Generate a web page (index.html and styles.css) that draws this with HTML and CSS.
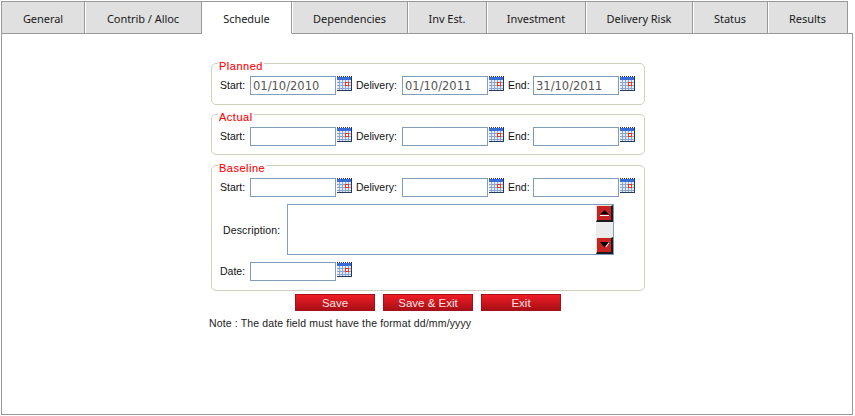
FILE: index.html
```html
<!DOCTYPE html>
<html lang="en">
<head>
<meta charset="utf-8">
<title>Schedule</title>
<link rel="stylesheet" href="styles.css">
</head>
<body>
<svg class="defs" width="0" height="0" aria-hidden="true">
  <symbol id="cal" viewBox="0 0 15 15">
    <path d="M0 .5h15" stroke="#333" stroke-dasharray="1 1"/>
    <rect x="0" y="1" width="15" height="3" fill="#3a6cd6"/>
    <rect x="0" y="4" width="15" height="10" fill="#e6ecf8"/>
    <path d="M2.5 4v10M5.5 4v10M8.5 4v10M11.5 4v10M0 6.5h15M0 9.5h15M0 12.5h15" stroke="#8ba6d2"/>
    <rect x="8.5" y="6.5" width="3" height="3" fill="#fff" stroke="#e8380f"/>
    <path d="M0 14.5h15M14.5 1v14" stroke="#24395c"/>
  </symbol>
</svg>
<div class="page">
  <nav class="tabs">
    <a class="tab w-general">General</a>
    <a class="tab w-contrib">Contrib / Alloc</a>
    <a class="tab tab-active w-schedule">Schedule</a>
    <a class="tab w-dep">Dependencies</a>
    <a class="tab w-inv">Inv Est.</a>
    <a class="tab w-investment">Investment</a>
    <a class="tab w-risk">Delivery Risk</a>
    <a class="tab w-status">Status</a>
    <a class="tab w-results">Results</a>
  </nav>
  <main class="panel">
    <form class="form">
      <fieldset class="group">
        <legend>Planned</legend>
        <div class="row">
          <label class="lbl lbl-start">Start:</label><input class="date" value="01/10/2010"><svg class="cal"><use href="#cal"/></svg>
          <label class="lbl lbl-delivery">Delivery:</label><input class="date" value="01/10/2011"><svg class="cal"><use href="#cal"/></svg>
          <label class="lbl lbl-end">End:</label><input class="date" value="31/10/2011"><svg class="cal"><use href="#cal"/></svg>
        </div>
      </fieldset>
      <fieldset class="group group-short">
        <legend>Actual</legend>
        <div class="row">
          <label class="lbl lbl-start">Start:</label><input class="date"><svg class="cal"><use href="#cal"/></svg>
          <label class="lbl lbl-delivery">Delivery:</label><input class="date"><svg class="cal"><use href="#cal"/></svg>
          <label class="lbl lbl-end">End:</label><input class="date"><svg class="cal"><use href="#cal"/></svg>
        </div>
      </fieldset>
      <fieldset class="group group-tall">
        <legend>Baseline</legend>
        <div class="row">
          <label class="lbl lbl-start">Start:</label><input class="date"><svg class="cal"><use href="#cal"/></svg>
          <label class="lbl lbl-delivery">Delivery:</label><input class="date"><svg class="cal"><use href="#cal"/></svg>
          <label class="lbl lbl-end">End:</label><input class="date"><svg class="cal"><use href="#cal"/></svg>
        </div>
        <div class="row row-desc">
          <label class="lbl lbl-desc">Description:</label>
          <div class="textbox">
            <textarea class="text"></textarea>
            <div class="scroll">
              <span class="sbtn"><svg class="arrow" viewBox="0 0 9 6"><path d="M4.5 0L9 4.5H0z"/><path class="arrow-hi" d="M0 5h9v1H0z"/></svg></span>
              <span class="track"></span>
              <span class="sbtn"><svg class="arrow" viewBox="0 0 9 6"><path d="M0 0h9L4.5 5.5z"/><path class="arrow-hi" d="M5.5 4.5L9 0v1.5L6 5.5z"/></svg></span>
            </div>
          </div>
        </div>
        <div class="row row-date">
          <label class="lbl lbl-start">Date:</label><input class="date"><svg class="cal"><use href="#cal"/></svg>
        </div>
      </fieldset>
      <div class="actions">
        <button type="button" class="btn btn-save">Save</button>
        <button type="button" class="btn btn-saveexit">Save &amp; Exit</button>
        <button type="button" class="btn btn-save">Exit</button>
      </div>
      <p class="note">Note : The date field must have the format dd/mm/yyyy</p>
    </form>
  </main>
</div>
</body>
</html>
```
FILE: styles.css
```css
* { box-sizing: border-box; }
html, body { margin: 0; padding: 0; background: #fff; }
body { width: 855px; height: 416px; overflow: hidden; font-family: "Liberation Sans", Arial, sans-serif; font-size: 11px; color: #111; }
.defs { position: absolute; }
.page { display: flex; flex-direction: column; height: 415px; padding: 1px 0 0 1px; width: 853px; }
.tabs { display: flex; height: 33px; position: relative; z-index: 1; }
.tab { display: flex; align-items: center; justify-content: center; height: 33px; background: #e0e0e0; border: solid #999; border-width: 1px 1px 1px 0; box-shadow: inset 1px 0 0 #fff; font-family: "Noto Sans", sans-serif; font-size: 11px; letter-spacing: -.05px; color: #1a1a1a; padding-top: 1px; }
.tab-active { background: #fff; border-bottom-color: #fff; box-shadow: none; }
.w-general { width: 84px; border-left-width: 1px; box-shadow: none; }
.w-contrib { width: 117px; }
.w-schedule { width: 90px; }
.w-dep { width: 116px; }
.w-inv { width: 79px; }
.w-investment { width: 99px; }
.w-risk { width: 107px; }
.w-status { width: 75px; }
.w-results { width: 80px; }
.panel { flex: 1; margin-top: -1px; border: 1px solid #999; background: #fff; padding: 26px 0 0 207px; }
.form { width: 437px; }
.group { margin: 0 0 6px 2px; padding: 10px 8px 0 8px; width: 434px; height: 45px; border: 1px solid #d0d0bf; border-radius: 5px; }
.group-short { height: 44px; margin-bottom: 7px; }
.group-tall { height: 129px; margin-bottom: 3px; }
.group legend { height: 6px; padding: 0 1px; margin-left: -2px; color: #f00; font-size: 11px; font-weight: 400; line-height: 13px; letter-spacing: .5px; -webkit-text-stroke: .1px #f00; }
.row { display: flex; align-items: flex-start; height: 19px; }
.lbl { display: block; font-size: 10.5px; line-height: 18px; color: #111; white-space: nowrap; }
.lbl-start { width: 30px; }
.lbl-delivery { width: 46px; margin-left: 4px; }
.lbl-end { width: 25px; margin-left: 4px; }
.date { width: 86px; height: 19px; padding: 0 2px; border: 1px solid #7f9db9; background: #fff; font-family: "DejaVu Sans", sans-serif; font-size: 11.5px; color: #555; outline: 0; }
.cal { width: 15px; height: 15px; margin-left: 1px; }
.row-desc { height: 51px; margin-top: 7px; align-items: center; }
.lbl-desc { width: 64px; margin-left: 3px; letter-spacing: .15px; }
.textbox { display: flex; width: 327px; height: 51px; border: 1px solid #7f9db9; }
.text { flex: 1; min-width: 0; border: 0; outline: 0; resize: none; background: #fff; }
.scroll { display: flex; flex-direction: column; width: 17px; background: #ececec; }
.sbtn { display: flex; align-items: center; justify-content: center; height: 17px; background: #c92222; border: solid; border-width: 1px 2px 2px 1px; border-color: #ece9d8 #1c1c1c #1c1c1c #ece9d8; }
.track { flex: 1; }
.arrow { width: 9px; height: 6px; fill: #000; }
.arrow-hi { fill: #fff; }
.row-date { margin-top: 7px; }
.actions { display: flex; gap: 8px; margin-left: 86px; }
.btn { height: 17px; padding: 1px 0 0; border: 1px solid #a5101a; background: linear-gradient(#f01c25, #a80f16); color: #f4e4e4; font-family: "Liberation Sans", Arial, sans-serif; font-size: 11.5px; line-height: 14px; }
.btn-save { width: 80px; }
.btn-saveexit { width: 90px; }
.note { margin: 6px 0 0 0; font-size: 10.5px; line-height: 13px; letter-spacing: .14px; color: #222; white-space: nowrap; }
```
